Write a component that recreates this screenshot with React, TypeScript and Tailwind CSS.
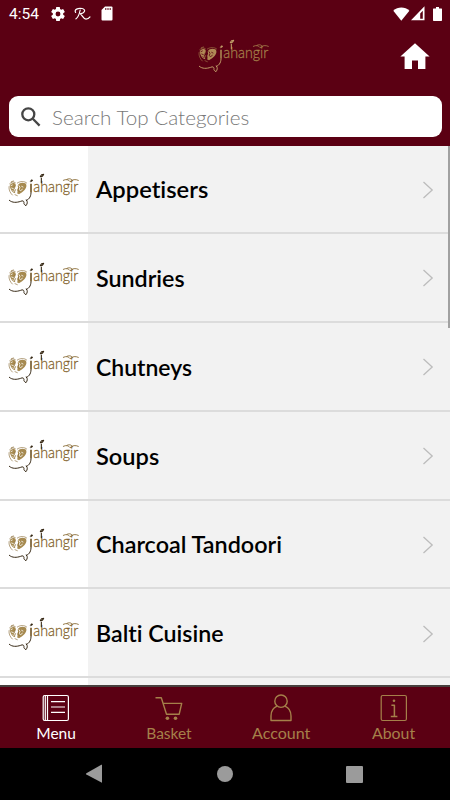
import React from "react";

const categories = [
  { name: "Appetisers", width: "w-[112px]" },
  { name: "Sundries", width: "w-[89px]" },
  { name: "Chutneys", width: "w-[96px]" },
  { name: "Soups", width: "w-[63px]" },
  { name: "Charcoal Tandoori", width: "w-[186px]" },
  { name: "Balti Cuisine", width: "w-[128px]" },
];

function Logo({ onDark = false }: { onDark?: boolean }) {
  const ink = onDark ? "#a5804a" : "#806027";
  const edge = onDark ? "#c09d68" : "#352713";
  const shade = onDark ? "#b08a55" : "#a68a50";
  const paper = onDark ? "#5b0013" : "#fff";
  return (
    <svg className="shrink-0" width="90" height="50" viewBox="0 0 270 150" fill="none" stroke={ink} strokeLinecap="round" strokeLinejoin="round">
      <path d="M29 63c2-9 10-10 15-8 6 3 2 9-1 14-3 4 2 10 3 16-9-2-14-10-17-22Z" fill={shade} stroke="none" />
      <path d="M54 60c4-7 14-9 22-5 6 5 3 15-3 21-6 5-9 8-16 12l-6-3c4-5-1-10 2-14 4-5-2-6 1-11Z" fill={shade} stroke="none" />
      <path d="M27 65c-1 11 4 19 10 25M29 56c5-5 11-7 17-3M52 54c8-6 22-6 28 0M34 50l7-2M46 62l-3 9 4 3-3 6M56 70l-2 6 4 4M45 89l7 3" strokeWidth="1.8" />
      <path d="M33 62l4-2M35 69l5 2M65 64l4 2M39 77l3 3M63 76l4-3M57 62l3 5-2 6 3 4" stroke={paper} strokeWidth="2.4" />
      <path d="M28 106c9 8 22 7 34 3 6-3 10-1 10 4-1 4 1 6 6 9 4-6 6-11 1-17M79 106c10-3 15-14 14-28V58" stroke={edge} strokeWidth="3" />
      <path d="M93 57V81" stroke={ink} strokeWidth="3.5" />
      <path d="M91 49l3-5 5 2-5 4Z" fill={edge} stroke={edge} strokeWidth="1.5" />
      <text x="100" y="82" textLength="135" lengthAdjust="spacingAndGlyphs" fill={ink} stroke={ink} strokeWidth=".8" fontSize="48" fontWeight="300" fontFamily="Lato, sans-serif">ahangir</text>
      <path d="M124 53V39M121 35l4-6 6-1-4 6Z" stroke={edge} strokeWidth="3.2" />
      <path d="M190 46c9-4 15-3 20 4 8-7 16-8 25-4M201 43c7-4 14-1 17 4" stroke={ink} strokeWidth="2.5" />
    </svg>
  );
}

function StatusBar() {
  return (
    <div className="flex h-[27px] items-center pl-[9px] pr-[7px] text-white">
      <span className="w-[42px] pt-[2px] font-['Roboto',sans-serif] text-[15.5px] leading-none">4:54</span>
      <svg width="14" height="14" viewBox="2 2 20 20" fill="currentColor">
        <path fillRule="evenodd" d="M9.5 2h5l.5 3 1.5.8 2.8-1.1 2.5 4.3-2.4 1.9v2.2l2.4 1.9-2.5 4.3-2.8-1.1-1.5.8-.5 3h-5L9 19l-1.5-.8-2.8 1.1L2.2 15l2.4-1.9v-2.2L2.2 9l2.5-4.3 2.8 1.1L9 5ZM12 8.5a3.5 3.5 0 1 0 0 7 3.5 3.5 0 0 0 0-7Z" />
      </svg>
      <svg className="ml-[9px]" width="17" height="14" viewBox="0 0 17 14" fill="none" stroke="currentColor" strokeWidth="1.2" strokeLinecap="round">
        <path d="M1.6 5.4C-.2 2.5 4 .8 8 1.5c4 .8 3.5 4.5-2 5.4 2 .2 3 5.2 6 5.2 2 0 3-.8 4-2.2M6.2 3C5.4 7 4 10.5 2 11.8" />
      </svg>
      <svg className="ml-[10px]" width="12" height="15" viewBox="0 0 12 15"><path d="M4 .5h6.5a1 1 0 0 1 1 1v12a1 1 0 0 1-1 1h-9a1 1 0 0 1-1-1V4Z" fill="#fff" /><path d="M4.8 2v2M7 2v2M9.2 2v2" stroke="#5b0013" strokeWidth="1" /></svg>
      <svg className="ml-auto" width="17" height="14" viewBox="0 0 17 14"><path d="M.3 3.8C4.8-.5 12-.5 16.4 3.8L8.3 13.8Z" fill="#fff" /></svg>
      <svg className="ml-[1px]" width="14" height="15" viewBox="0 0 14 15"><path fillRule="evenodd" d="M13.5.3v14H0ZM11.8 4.8 9.2 7.5v5.3h2.6Z" fill="#fff" /></svg>
      <svg className="ml-[8px] mr-[1px]" width="9" height="14" viewBox="0 0 9 14"><path d="M3 0h3v1.5h2.5a.5.5 0 0 1 .5.5v11.3a.7.7 0 0 1-.7.7H.7a.7.7 0 0 1-.7-.7V2a.5.5 0 0 1 .5-.5H3Z" fill="#fff" /></svg>
    </div>
  );
}

function FittedText({ text, className, size, weight, baseline }: { text: string; className: string; size: number; weight: number; baseline: number }) {
  const span = React.useRef<HTMLSpanElement>(null);
  const [scale, setScale] = React.useState(1);
  React.useLayoutEffect(() => {
    const fit = () => {
      const el = span.current;
      if (el?.parentElement) setScale(el.parentElement.clientWidth / el.offsetWidth);
    };
    fit();
    document.fonts?.ready.then(fit);
  }, []);
  return (
    <span className={`block whitespace-nowrap leading-none [font-variant-ligatures:none] ${className}`} style={{ fontSize: size, fontWeight: weight, paddingTop: baseline }}>
      <span ref={span} className="inline-block origin-left" style={{ transform: `scaleX(${scale})` }}>{text}</span>
    </span>
  );
}

function TabIcon({ name }: { name: string }) {
  return (
    <svg width="30" height="30" viewBox="0 0 30 30" fill="none" stroke="currentColor" strokeWidth="1.2" strokeLinejoin="round">
      {name === "Menu" && <><rect x="2.2" y="2.5" width="25.2" height="25" rx="1.5" /><path d="M4.3 2.5v25M6.5 2.5v25M10 8.7h14M10 14h14M10 19.3h14" /></>}
      {name === "Basket" && <><path d="M1.5 4.8h5.8l5.2 16.4h12.7l2.5-10.8H9.1" strokeWidth="1.4" /><circle cx="13.4" cy="25.3" r="1.8" fill="currentColor" stroke="none" /><circle cx="21.5" cy="25.3" r="1.8" fill="currentColor" stroke="none" /></>}
      {name === "Account" && <><circle cx="15" cy="8.2" r="6.2" strokeWidth="1.4" /><path d="M11 13.2C6.8 15 5 18.4 5 23v4.5h20V23c0-4.6-1.8-8-6-9.8" strokeWidth="1.4" /></>}
      {name === "About" && <><rect x="2.2" y="2.5" width="25.2" height="25" rx="1.5" /><path d="M12.4 12.2h3v11.2M11.8 23.4h6.6" strokeWidth="1.5" /><circle cx="15" cy="7.7" r="1.3" fill="currentColor" stroke="none" /></>}
    </svg>
  );
}

const tabs = [
  { name: "Menu", width: "w-[40px]" },
  { name: "Basket", width: "w-[45px]" },
  { name: "Account", width: "w-[58px]" },
  { name: "About", width: "w-[43px]" },
];

export default function App() {
  return (
    <div className="flex h-[800px] w-[450px] flex-col overflow-hidden bg-black font-['Lato',sans-serif]">
      <header className="h-[145.5px] shrink-0 bg-[#5b0013]">
        <StatusBar />
        <div className="grid h-[69px] grid-cols-[190px_90px_1fr] pt-1">
          <span />
          <Logo onDark />
          <svg className="ml-auto mr-[20px] mt-[12px]" width="30" height="26" viewBox="0 0 30 26" fill="#fff"><path d="M15 .2 29.6 13.5h-4.2V26H18v-8.5h-6V26H4.6V13.5H.4Z" /></svg>
        </div>
        <div className="mx-[8.5px] flex h-[41px] items-center rounded-[9px] bg-white pl-3">
          <svg width="20" height="20" viewBox="0 0 20 20" fill="none" stroke="#454545" strokeWidth="2.3"><circle cx="7.3" cy="7.3" r="6" /><path d="m11.8 11.8 6.8 6.8" /></svg>
          <FittedText text="Search Top Categories" className="ml-[11.5px] w-[197px] text-[#787878]" size={20} weight={300} baseline={0} />
        </div>
      </header>
      <main className="relative h-[539px] shrink-0 overflow-hidden bg-[#f2f2f2]">
        {categories.map(({ name, width }) => (
          <div key={name} className="flex h-[88.8px] items-center border-b-2 border-[#dcdcdc]">
            <div className="flex h-full w-[87.5px] shrink-0 items-center overflow-hidden bg-white pt-[2px]"><Logo /></div>
            <FittedText text={name} className={`ml-[8px] text-black ${width}`} size={22.5} weight={600} baseline={3} />
            <svg className="ml-auto mr-[16px] mt-[1.5px]" width="12" height="18" viewBox="0 0 12 18" fill="none" stroke="#bcbcbc" strokeWidth="1.3"><path d="m1.5 1 8.7 8-8.7 8" /></svg>
          </div>
        ))}
        <div className="h-[7px] w-[87.5px] bg-white" />
        <div className="absolute right-0 top-0 h-[182px] w-[2px] bg-[#a1a1a1]" />
      </main>
      <nav className="grid h-[63.5px] shrink-0 grid-cols-4 border-t-2 border-[#47403e] bg-[#5b0013]">
        {tabs.map(({ name, width }) => (
          <div key={name} className={`flex flex-col items-center pt-[6px] ${name === "Menu" ? "text-white" : "text-[#a5804a]"}`}>
            <TabIcon name={name} />
            <FittedText text={name} className={width} size={15.5} weight={400} baseline={3} />
          </div>
        ))}
      </nav>
      <div className="flex h-[52px] items-center pl-[85px]">
        <svg width="18" height="20" viewBox="0 0 18 20" fill="#9b9b9b"><path d="M17 .8v18L1.4 10.6q-1-.8 0-1.4L16.3.7Z" /></svg>
        <div className="ml-[114px] h-4 w-4 rounded-full bg-[#9b9b9b]" />
        <div className="ml-[113px] h-[17px] w-[17px] rounded-[1px] bg-[#9b9b9b]" />
      </div>
    </div>
  );
}
